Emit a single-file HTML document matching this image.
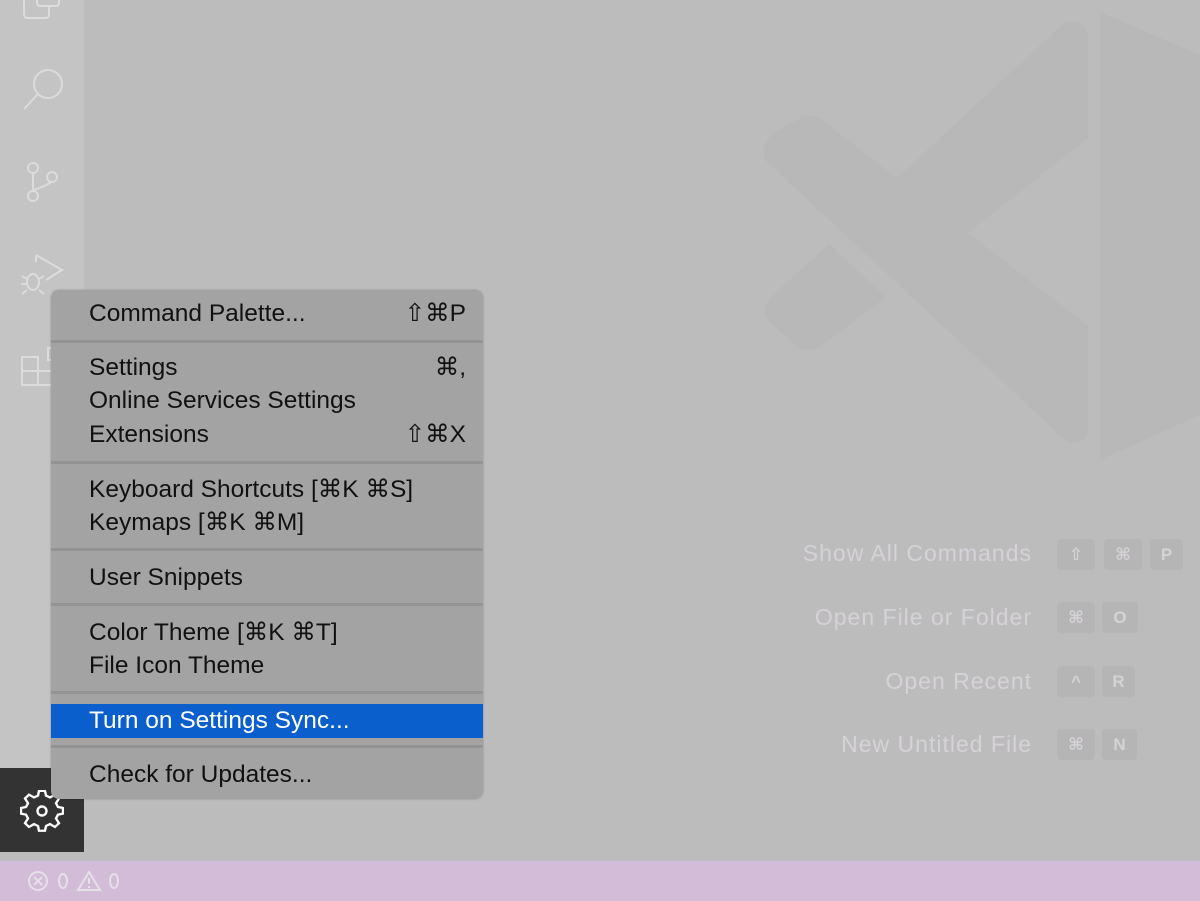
<!DOCTYPE html>
<html><head><meta charset="utf-8"><style>
*{margin:0;padding:0;box-sizing:border-box}
body{width:1200px;height:901px;background:#bcbcbc;position:relative;overflow:hidden;font-family:"Liberation Sans","DejaVu Sans",sans-serif}
.abs{position:absolute}
#act{left:0;top:0;width:84px;height:852px;background:#c4c4c4}
#gear{left:0;top:768px;width:84px;height:84px;background:#333}
#status{left:0;top:861px;width:1200px;height:40px;background:#d2bcd8}
#menu{left:51px;top:290px;width:432px;height:509px;background:#a3a3a3;border-radius:8px;box-shadow:0 0 2px rgba(0,0,0,.25)}
.it{position:absolute;left:38px;right:17px;height:34px;line-height:34px;font-size:24.5px;color:#111;white-space:nowrap}
.it span{position:absolute;right:0;top:0}
.sep{position:absolute;left:0;right:0;height:3px;background:#939393}
.hl{position:absolute;left:0;right:0;top:414px;height:34px;background:#0a5fcc}
.w{font-size:23px;color:#d6d2d8;text-align:right;letter-spacing:1px;white-space:nowrap}
.k{position:absolute;width:38px;height:31px;background:#b5b5b5;border-radius:4px;color:#d6d2d8;font-size:17px;font-weight:bold;text-align:center;line-height:31px}
</style></head><body>
<svg class="abs" style="left:740px;top:0" width="460" height="480" viewBox="740 0 460 480">
<path d="M1100 12 L1200 55 L1200 415 L1100 460 Z" fill="#b8b8b8"/>
<path d="M765 160 Q760 145 775 132 L800 118 Q810 113 822 120 L897 178 L1065 22 Q1088 18 1088 40 L1088 138 L968 233 L1088 326 L1088 430 Q1085 448 1065 440 Z" fill="#b8b8b8"/>
<path d="M829 244 L886 297 L820 347 Q806 355 795 345 L768 320 Q760 308 772 296 Z" fill="#b8b8b8"/>
</svg>
<div id="act" class="abs"></div>
<svg class="abs" style="left:0;top:0" width="84" height="400" fill="none" stroke="#dcdcdc" stroke-width="2">
<path d="M24 0 V14 Q24 18 28 18 H46 Q49 18 49 14 V5"/><path d="M37 0 V2 Q37 6 41 6 H56 Q59 6 59 2 V0"/>
<circle cx="48" cy="84" r="14"/><path d="M38 94 L24 109"/>
<circle cx="33" cy="168" r="5"/><circle cx="33" cy="196" r="5"/><circle cx="52" cy="177" r="5"/><path d="M33 173 V191 M51 182 Q48 185 34 190"/>
<path d="M36 255 L62 270 L46 280 M36 255 V262"/><ellipse cx="33" cy="282" rx="6" ry="8"/><path d="M22 276 L27 279 M22 294 L27 290 M44 276 L39 279 M44 294 L39 290 M21 284 H27"/>
<path d="M22 357 H38 V385 H22 Z M22 371 H52 V385 H38"/><rect x="48" y="348" width="4" height="12"/>
<circle cx="42" cy="718" r="19"/><circle cx="42" cy="712" r="7"/><path d="M30 732 Q42 720 54 732"/>
</svg>
<div id="gear" class="abs"></div>
<svg class="abs" style="left:20px;top:790px" width="44" height="44" viewBox="0 0 44 44" fill="none" stroke="#fff" stroke-width="2.4">
<path d="M19 3 H25 L26 8 L30 10 L35 7 L39 11 L36 16 L38 20 L43 21 V27 L38 28 L36 32 L39 37 L35 41 L30 38 L26 40 L25 45 H19 L18 40 L14 38 L9 41 L5 37 L8 32 L6 28 L1 27 V21 L6 20 L8 16 L5 11 L9 7 L14 10 L18 8 Z" transform="translate(0,-2) scale(1,0.95)"/>
<circle cx="22" cy="21" r="4.5"/>
</svg>
<div class="abs" style="left:0;top:852px;width:1200px;height:9px;background:#bcbcbc"></div>
<div id="status" class="abs"></div>
<svg class="abs" style="left:26px;top:870px" width="100" height="24" fill="none" stroke="#e6e0e8" stroke-width="2">
<circle cx="12" cy="11" r="9"/><path d="M8 7 L16 15 M16 7 L8 15"/>
<ellipse cx="37" cy="11" rx="4" ry="7"/>
<path d="M63 2 L74 20 H52 Z M63 8 V14 M63 16 V18"/>
<ellipse cx="88" cy="11" rx="4" ry="7"/>
</svg>
<div class="abs w" style="left:600px;top:540px;width:432px">Show All Commands</div>
<div class="abs w" style="left:600px;top:604px;width:432px">Open File or Folder</div>
<div class="abs w" style="left:600px;top:668px;width:432px">Open Recent</div>
<div class="abs w" style="left:600px;top:731px;width:432px">New Untitled File</div>
<div class="k" style="left:1057px;top:539px">⇧</div><div class="k" style="left:1104px;top:539px">⌘</div><div class="k" style="left:1150px;top:539px;width:33px">P</div>
<div class="k" style="left:1057px;top:602px">⌘</div><div class="k" style="left:1102px;top:602px;width:36px">O</div>
<div class="k" style="left:1057px;top:666px">^</div><div class="k" style="left:1102px;top:666px;width:33px">R</div>
<div class="k" style="left:1057px;top:729px">⌘</div><div class="k" style="left:1102px;top:729px;width:35px">N</div>
<div id="menu" class="abs">
<div class="it" style="top:7px">Command Palette...<span>⇧⌘P</span></div>
<div class="sep" style="top:50px"></div>
<div class="it" style="top:61px">Settings<span>⌘,</span></div>
<div class="it" style="top:94px">Online Services Settings</div>
<div class="it" style="top:128px">Extensions<span>⇧⌘X</span></div>
<div class="sep" style="top:171px"></div>
<div class="it" style="top:183px">Keyboard Shortcuts [⌘K ⌘S]</div>
<div class="it" style="top:216px">Keymaps [⌘K ⌘M]</div>
<div class="sep" style="top:258px"></div>
<div class="it" style="top:271px">User Snippets</div>
<div class="sep" style="top:313px"></div>
<div class="it" style="top:326px">Color Theme [⌘K ⌘T]</div>
<div class="it" style="top:359px">File Icon Theme</div>
<div class="sep" style="top:401px"></div>
<div class="hl"></div>
<div class="it" style="top:414px;color:#fff">Turn on Settings Sync...</div>
<div class="sep" style="top:455px"></div>
<div class="it" style="top:468px">Check for Updates...</div>
</div>
</body></html>
